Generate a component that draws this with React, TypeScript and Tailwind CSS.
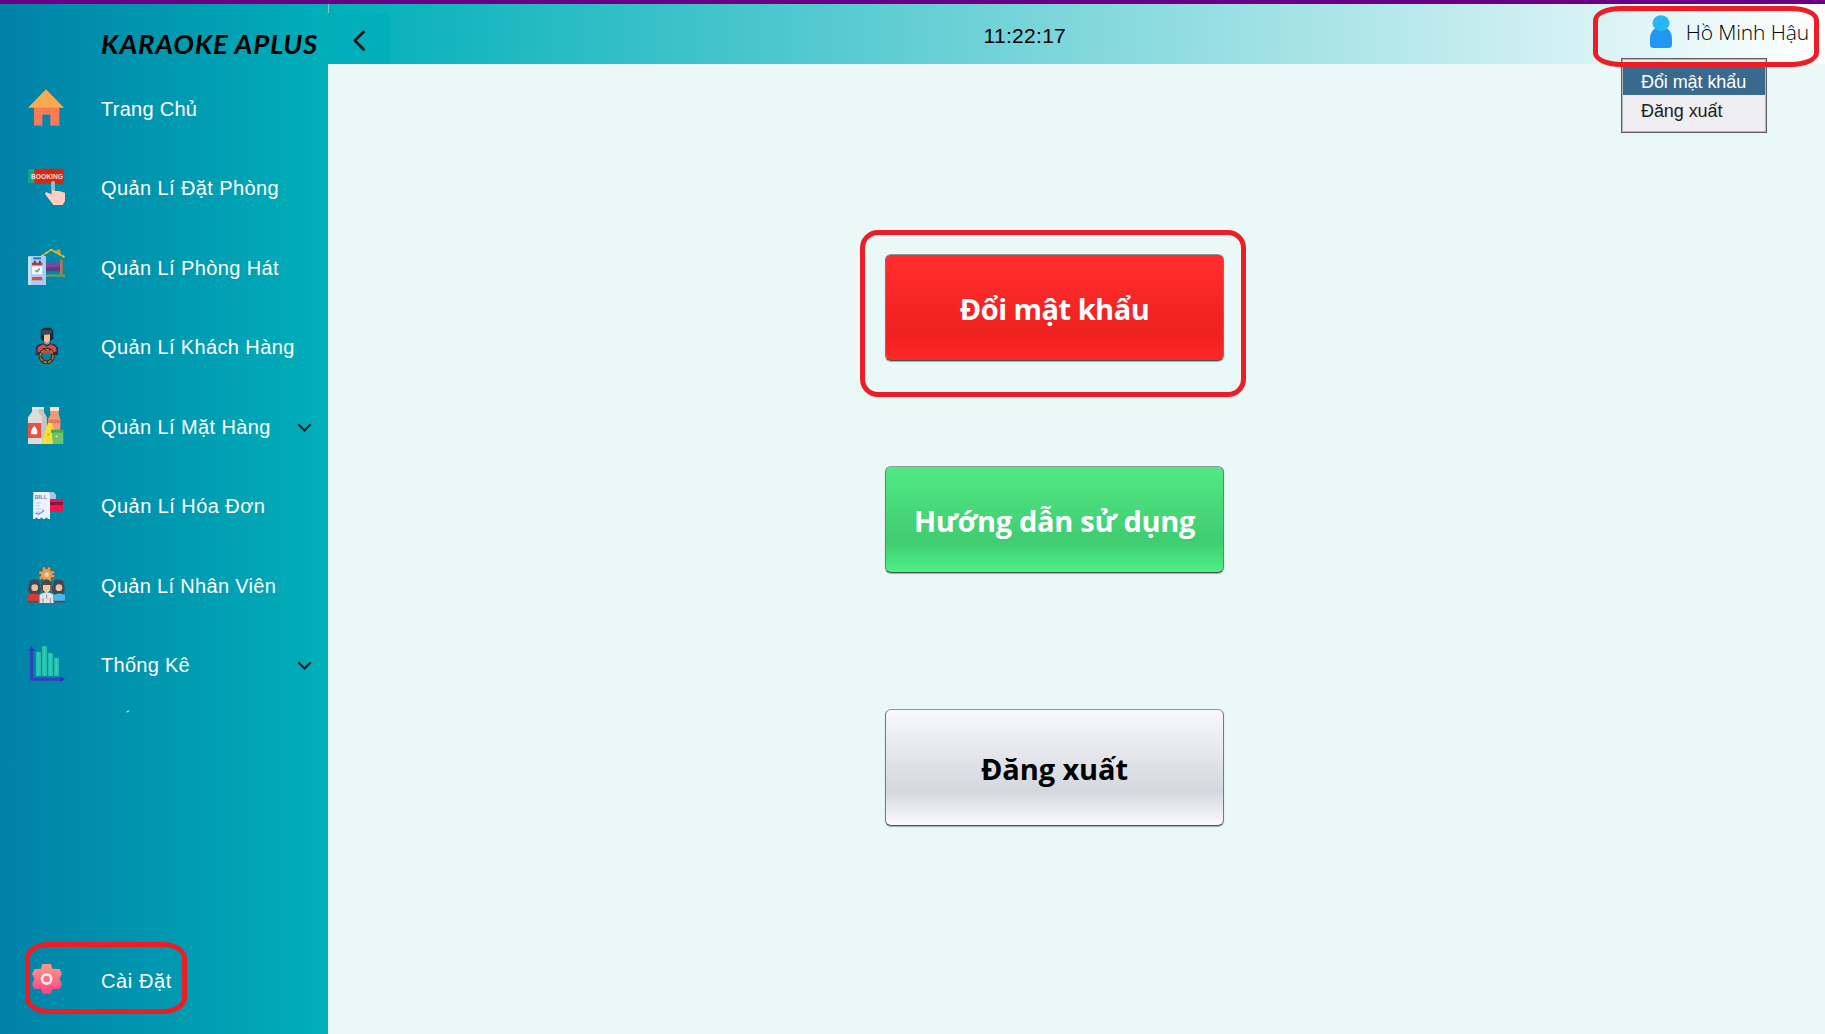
import type { ReactNode } from "react";

const Home = () => (
  <svg viewBox="54 42 111 111" className="size-[37px] shrink-0">
    <path d="M72 97h76v55h-27v-35H97v35H72z" fill="#fb7b57" />
    <path d="M72 149h25v4H72zM121 149h27v4h-27z" fill="#7d8c91" />
    <path d="M97 118h24" stroke="#b98372" strokeWidth="3" />
    <path d="M108 43 162 98H54z" fill="#fba94f" />
  </svg>
);

const Booking = () => (
  <svg viewBox="54 279 111 111" className="size-[37px] shrink-0">
    <rect x="55" y="282" width="30" height="43" rx="3" fill="#1fa483" />
    <rect x="73" y="281" width="88" height="45" rx="3" fill="#d02a12" />
    <text x="63" y="311" fontSize="22" fontWeight="700" fill="#f6dede" textLength="96" lengthAdjust="spacingAndGlyphs" fontFamily="Liberation Sans, sans-serif">
      BOOKING
    </text>
    <path d="M124 322q5-6 10 0v26h13l18 5v25l-8 13h-26l-10-13-16-21 3-6 17 7z" fill="#ffcfc2" />
    <path d="M124 322q5-6 10 0v24h-10z" fill="#9fb9c4" />
  </svg>
);

const Room = () => (
  <svg viewBox="54 516 111 111" className="size-[37px] shrink-0">
    <path d="M94 541 124 521 163 543" stroke="#b9b53c" strokeWidth="5" fill="none" />
    <path d="M94 541 124 521 163 543" stroke="#e2c526" strokeWidth="5" strokeDasharray="9 6" fill="none" />
    <rect x="140" y="521" width="11" height="13" fill="#f59a20" />
    <path d="M108 560h42v14h-42z" fill="#8a3e9e" />
    <path d="M108 574h42v12h-42z" fill="#4d4480" />
    <rect x="150" y="551" width="8" height="46" fill="#b5754e" />
    <path d="M106 599h59" stroke="#639b6a" strokeWidth="7" />
    <path d="M58 540h50v88H55V543z" fill="#a9cdf4" />
    <path d="M54 542h9v86h-9z" fill="#c5dff8" />
    <path d="M70 544h23v6H70z" fill="#2e73c8" />
    <rect x="66" y="560" width="31" height="8" fill="#bd3740" />
    <path d="M72 554h5v8h-5zM87 554h5v8h-5z" fill="#3a4468" />
    <rect x="66" y="571" width="31" height="24" fill="#f4faf7" />
    <path d="m76 583 5 4 8-9" stroke="#5aa886" strokeWidth="5" fill="none" />
    <rect x="66" y="603" width="31" height="10" rx="2" fill="#e24c40" />
  </svg>
);

const Customer = () => (
  <svg viewBox="54 51 111 111" className="size-[37px] shrink-0">
    <path d="M93 60 101 53h21l8 9v24l-7 6H98l-6-6z" fill="#20262f" />
    <path d="M103 88h14v15h-14z" fill="#c98e6e" />
    <path d="M102 73h18v18l-5 6h-8l-5-6z" fill="#f2bf98" />
    <path d="M96 60h30v10l-9 3-21 2z" fill="#3e4853" />
    <path d="m101 100-17 4-7 9v22h9l11 15h26l12-15h9v-22l-8-9-15-4-10 6z" fill="#242b38" />
    <path d="m100 103-15 7-3 14 12 6h32l14-6-3-14-15-7-11 7z" fill="#d04b59" />
    <path d="M78 115h6v18h-6z" fill="#2b4772" />
    <circle cx="110" cy="138" r="19" fill="#0a7f9c" stroke="#302820" strokeWidth="11" />
    <path d="M94 122h33v9H94z" fill="#c04654" />
    <circle cx="110" cy="138" r="19" fill="none" stroke="#b47a25" strokeWidth="5" strokeDasharray="11 3" />
  </svg>
);

const Goods = () => (
  <svg viewBox="54 291 111 111" className="size-[37px] shrink-0">
    <path d="M66 291h35v14l9 17v80H54v-80l12-17z" fill="#dedbd8" />
    <path d="M86 291h15v14l9 17v80H96v-82l-10-12z" fill="#c7c3c0" />
    <path d="M66 291h35v5H66z" fill="#f4f0ed" />
    <path d="M54 339h40v45H54z" fill="#e65341" />
    <path d="M73 347q14 18 7 26h-15q-7-9 8-26" fill="#fff" />
    <path d="M121 301h25v12l5 15v32h-37v-33l7-12z" fill="#f39a75" />
    <path d="M120 291h27v12h-27z" fill="#fbe1c4" />
    <path d="M115 329h36v10h-36z" fill="#e2775b" />
    <path d="M114 339h11l7 21v42H95l6-24z" fill="#f7df36" />
    <circle cx="115" cy="373" r="4" fill="#d7b622" />
    <path d="M124 360h36v42h-31z" fill="#6dc36b" />
    <path d="M123 359h38v9h-38z" fill="#48a952" />
    <path d="M137 377h6v5h-6z" fill="#c2edbc" />
  </svg>
);

const Bill = () => (
  <svg viewBox="54 528 111 111" className="size-[37px] shrink-0">
    <path d="M112 546h19l7 8v20h-22z" fill="#a5c4e8" />
    <path d="M70 546h47l3 8v73h-7v-4h-7v4h-8v-4h-7v4h-8v-4h-7v4h-7z" fill="#edf3fd" />
    <text x="74" y="567" fontSize="17" fontWeight="700" textLength="38" lengthAdjust="spacingAndGlyphs" fill="#727a98" fontFamily="Liberation Sans, sans-serif">
      BILL
    </text>
    <path d="M76 579h18M76 587h14M76 597h23M76 606h14" stroke="#c4daf5" strokeWidth="4" />
    <path d="m77 609 8 3 8-3 9-8" stroke="#4c91e2" strokeWidth="4" fill="none" />
    <path d="M120 567h39v37h-39z" fill="#ed174a" />
    <path d="M120 576h39v9h-39z" fill="#8c1440" />
  </svg>
);

const Staff = () => (
  <svg viewBox="54 78 111 111" className="size-[37px] shrink-0">
    <circle cx="110" cy="104" r="20" fill="none" stroke="#6a5a4c" strokeWidth="11" strokeDasharray="9 6.7" />
    <circle cx="110" cy="104" r="19" fill="none" stroke="#f49b42" strokeWidth="9" strokeDasharray="7 7.92" strokeDashoffset="-1" />
    <circle cx="110" cy="104" r="12" fill="#d8d2cf" stroke="#f49b42" strokeWidth="10" />
    <path d="M60 122q12-9 27 0l6 26-6 16H60l-7-16zM132 122q14-9 27 0l6 26-6 16h-27l-7-16z" fill="#424850" />
    <circle cx="74" cy="143" r="10" fill="#efbf9e" />
    <circle cx="147" cy="143" r="10" fill="#efbf9e" />
    <path d="M54 165q18-9 34 0v22H54z" fill="#df3639" />
    <path d="M130 165q18-9 35 0v22h-35z" fill="#45b9ee" />
    <path d="M54 182h111v6H54z" fill="#4a535e" />
    <path d="M94 126q15-16 30 0v20l-6 12h-18l-6-12z" fill="#4c4947" />
    <path d="M99 135h22v16l-11 9-11-9z" fill="#f0c4a7" />
    <path d="M88 165q22-16 44 0v24H88z" fill="#e6e3e3" />
    <path d="M110 164v12M99 174v14M121 174v14M88 165v23M131 165v23" stroke="#8b8e92" strokeWidth="3" />
  </svg>
);

const Stats = () => (
  <svg viewBox="54 315 111 111" className="size-[37px] shrink-0">
    <path d="M65 418V326M61 418h93" stroke="#3140bd" strokeWidth="9" />
    <path d="m56 333 9-15 9 15zM151 409l14 9-14 9z" fill="#3434c4" />
    <path d="M78 336h15v72H78zM96 319h15v89H96zM114 339h15v69h-15zM132 354h15v54h-15z" fill="#20bfb0" />
    <path d="M83 336h4v70h-4zM101 319h4v87h-4zM119 339h4v67h-4zM137 354h4v52h-4z" fill="#37d0b8" />
  </svg>
);

const Gear = () => (
  <svg viewBox="84 123 111 111" className="size-[37px] shrink-0">
    <defs>
      <linearGradient id="gear" x1="0" y1="0" x2="0" y2="1">
        <stop offset="0" stopColor="#fd9c85" />
        <stop offset="1" stopColor="#fc4189" />
      </linearGradient>
    </defs>
    <path d="M127 132h26l4 14 14 1 8 0 7 15-8 15 8 15-8 15-21 0-4 14h-26l-4-14-20-1-7-14 8-15-8-15 7-14 20-2z" fill="url(#gear)" />
    <circle cx="140" cy="177" r="14" fill="none" stroke="#ffe7e8" strokeWidth="8" />
  </svg>
);

const Down = () => (
  <svg viewBox="0 0 16 10" className="absolute left-[297px] top-[37px] h-[10px] w-4">
    <path d="m1.3 1.3 6.2 6.2 6.2-6.2" stroke="#06181c" strokeWidth="2" fill="none" />
  </svg>
);

const items: { label: string; icon: ReactNode; spacing: string; more?: boolean }[] = [
  { label: "Trang Chủ", icon: <Home />, spacing: "tracking-[0.28px]" },
  { label: "Quản Lí Đặt Phòng", icon: <Booking />, spacing: "tracking-[0.4px]" },
  { label: "Quản Lí Phòng Hát", icon: <Room />, spacing: "tracking-[0.4px]" },
  { label: "Quản Lí Khách Hàng", icon: <Customer />, spacing: "tracking-[0.38px]" },
  { label: "Quản Lí Mặt Hàng", icon: <Goods />, spacing: "tracking-[0.4px]", more: true },
  { label: "Quản Lí Hóa Đơn", icon: <Bill />, spacing: "tracking-[0.45px]" },
  { label: "Quản Lí Nhân Viên", icon: <Staff />, spacing: "tracking-[0.32px]" },
  { label: "Thống Kê", icon: <Stats />, spacing: "tracking-[0.28px]", more: true },
];

const ring = "pointer-events-none absolute border-[5px] border-[#ee1c24]";
const action =
  "flex w-[339px] shrink-0 items-center justify-center whitespace-nowrap rounded-[6px] border border-t-[#8f9a9c] border-x-[#737b7f] border-b-[#4c5156] font-['Open_Sans',sans-serif] text-[29px] font-bold shadow-[0_1px_1px_rgba(0,0,0,0.3)]";

export default function App() {
  return (
    <div className="relative flex h-[1034px] w-[1825px] flex-col overflow-hidden bg-[#eaf8f8] font-['Liberation_Sans',Arial,sans-serif]">
      <div className="h-1 shrink-0 bg-[#6a0083]" />
      <div className="flex min-h-0 flex-1">
        <aside className="flex w-[328px] shrink-0 flex-col bg-[linear-gradient(90deg,#0081a7,#00afb9)]">
          <h1 className="h-[63.5px] shrink-0 whitespace-nowrap pl-[101px] pt-[22px] font-['Lato',sans-serif] text-[27.5px] font-bold italic leading-[36px] tracking-[0.75px] text-black">
            KARAOKE APLUS
          </h1>
          <nav>
            {items.map((item) => (
              <div key={item.label} className="relative flex h-[79.5px] items-center pl-7">
                {item.icon}
                <span className={`ml-9 whitespace-nowrap pt-[3px] text-[20px] leading-6 text-white ${item.spacing}`}>{item.label}</span>
                {item.more && <Down />}
              </div>
            ))}
          </nav>
          <svg viewBox="0 0 4 3" className="ml-[126px] mt-[6px] h-[3px] w-1 shrink-0">
            <path d="m.5 2.2 2.6-1.4" stroke="#fff" strokeWidth="1" />
          </svg>
          <div className="mb-[18.5px] mt-auto flex h-[73px] items-center pl-7">
            <Gear />
            <span className="ml-9 whitespace-nowrap pt-[3px] text-[20px] leading-6 tracking-[0.6px] text-white">Cài Đặt</span>
          </div>
        </aside>

        <div className="flex flex-1 flex-col">
          <header className="flex h-[60px] shrink-0 bg-[linear-gradient(90deg,#00afb9,#ffffff)]">
            <div className="flex w-[62px] flex-col">
              <div className="h-[9px] border-l border-[#7fc7cf]" />
              <button className="flex flex-1 bg-[#00afb9] pl-[24px] pt-[16px]">
                <svg viewBox="0 0 14 24" className="h-6 w-[14px]">
                  <path d="M12.4 2 2.8 11.6l9.6 9.6" stroke="#0a1416" strokeWidth="2.8" fill="none" />
                </svg>
              </button>
            </div>
            <time className="ml-[593.5px] pt-[20px] text-[21px] leading-6 tracking-[0.3px] text-black">11:22:17</time>
            <div className="ml-auto flex pr-[16px]">
              <svg viewBox="0 0 22 34" className="mt-[11px] h-[34px] w-[22px]">
                <path d="M4 14h14q4 4 4 10v6q0 3-4 3H4q-4 0-4-3v-6q0-6 4-10" fill="#2196f3" />
                <ellipse cx="11" cy="8.2" rx="8.5" ry="8" fill="#29b6f6" />
              </svg>
              <span className="ml-[14px] whitespace-nowrap pt-[15px] font-['Open_Sans',sans-serif] text-[21px] font-light leading-[26px] tracking-[-0.12px] text-black">
                Hồ Minh Hậu
              </span>
            </div>
          </header>
          <main className="flex flex-1 flex-col items-start pl-[557px]">
            <button className={`${action} mt-[190px] h-[107px] bg-[linear-gradient(180deg,#ff2c2d_12%,#ee2020_75%,#ff2727_98%)] pt-[3px] tracking-[-0.5px] text-white`}>
              Đổi mật khẩu
            </button>
            <button className={`${action} mt-[105px] h-[107px] bg-[linear-gradient(180deg,#52e985,#40cc70_70%,#4df086)] pt-[2px] tracking-[-0.3px] text-white`}>
              Hướng dẫn sử dụng
            </button>
            <button className={`${action} mt-[136px] h-[117px] bg-[linear-gradient(180deg,#f8f9fa,#d5d7df_70%,#fbfbff)] pt-[3px] tracking-[-0.1px] text-black`}>
              Đăng xuất
            </button>
          </main>
        </div>
      </div>

      <div className="absolute left-[1621px] top-[58px] h-[75px] w-[146px] border border-[#5c5e60] bg-[#eeeef3] pt-[7px] text-[18px] tracking-[-0.08px] text-[#222] shadow-[inset_0_0_0_1px_#b5b8bb]">
        <div className="mx-px h-[29px] bg-[#39698c] pl-[18px] leading-[32px] text-white">Đổi mật khẩu</div>
        <div className="pl-[19px] leading-[32px]">Đăng xuất</div>
      </div>

      <div className={`${ring} left-[1593px] top-[6px] h-[61px] w-[226px] rounded-[28px/14px]`} />
      <div className={`${ring} left-[860px] top-[230px] h-[167px] w-[386px] rounded-[18px]`} />
      <div className={`${ring} left-[25px] top-[942px] h-[72px] w-[162px] rounded-[24px/16px]`} />
    </div>
  );
}
